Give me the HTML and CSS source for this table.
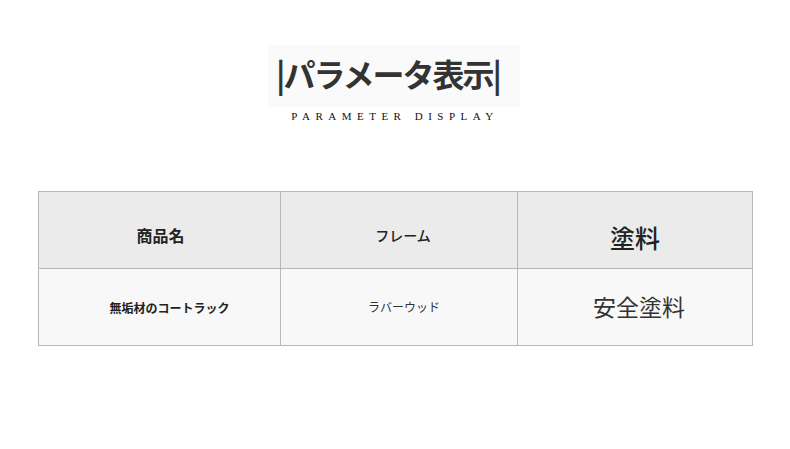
FILE: index.html
```html
<!DOCTYPE html>
<html lang="ja">
<head>
<meta charset="utf-8">
<link rel="stylesheet" href="styles.css">
</head>
<body>
<div class="page">
  <div class="heading">
    <div class="title-box">
      <h1 class="title">|パラメータ表示|</h1>
    </div>
    <p class="subtitle">PARAMETER DISPLAY</p>
  </div>
  <table class="spec">
    <colgroup>
      <col class="c1"><col class="c2"><col class="c3">
    </colgroup>
    <tr class="head">
      <td class="h-name">商品名</td>
      <td class="h-frame">フレーム</td>
      <td class="h-paint">塗料</td>
    </tr>
    <tr class="body">
      <td class="v-name"><span>無垢材のコートラック</span></td>
      <td class="v-frame"><span>ラバーウッド</span></td>
      <td class="v-paint"><span>安全塗料</span></td>
    </tr>
  </table>
</div>
</body>
</html>
```
FILE: styles.css
```css
html, body {
  margin: 0;
  padding: 0;
  background: #ffffff;
}
.page {
  width: 790px;
  height: 449px;
  font-family: "Noto Sans CJK JP", "Noto Sans", sans-serif;
  color: #222;
  padding-top: 45px;
  box-sizing: border-box;
}
.heading {
  display: flex;
  flex-direction: column;
  align-items: center;
}
.title-box {
  background: #fafafa;
  width: 252px;
  height: 62px;
  margin-left: -2px;
  display: flex;
  align-items: center;
  justify-content: flex-start;
  padding-left: 8px;
  padding-bottom: 7px;
  box-sizing: border-box;
}
.title {
  margin: 0;
  font-size: 32px;
  font-weight: 700;
  color: #333;
  line-height: 1;
  letter-spacing: -2px;
  white-space: nowrap;
}
.subtitle {
  margin: 3px 0 0 0;
  font-family: "Liberation Serif", "DejaVu Serif", serif;
  font-size: 11px;
  letter-spacing: 5.5px;
  color: #111;
  white-space: nowrap;
}
.spec {
  margin: 69px 0 0 38px;
  border-collapse: collapse;
  table-layout: fixed;
  width: 714px;
}
.c1 { width: 242px; }
.c2 { width: 237px; }
.c3 { width: 235px; }
.spec td {
  border: 1px solid #b8b8b8;
  text-align: center;
  vertical-align: middle;
  padding: 0;
  height: 77px;
  box-sizing: border-box;
}
.head td {
  background: #ebebeb;
}
.body td {
  background: #f8f8f8;
}
.h-name {
  font-size: 16px;
  font-weight: 700;
  color: #222;
  padding-top: 10px !important;
  padding-left: 2px !important;
}
.h-frame {
  font-size: 14px;
  font-weight: 500;
  color: #222;
  padding-top: 10px !important;
  padding-left: 8px !important;
}
.h-paint {
  font-size: 25px;
  font-weight: 500;
  color: #222;
  padding-top: 13px !important;
}
.v-name {
  font-size: 12px;
  font-weight: 700;
  color: #222;
  padding-left: 20px !important;
}
.v-frame {
  font-size: 12px;
  color: #333;
  padding-left: 10px !important;
  padding-bottom: 2px !important;
}
.v-paint {
  font-size: 23px;
  color: #333;
  padding-left: 8px !important;
  padding-bottom: 3px !important;
}
```
